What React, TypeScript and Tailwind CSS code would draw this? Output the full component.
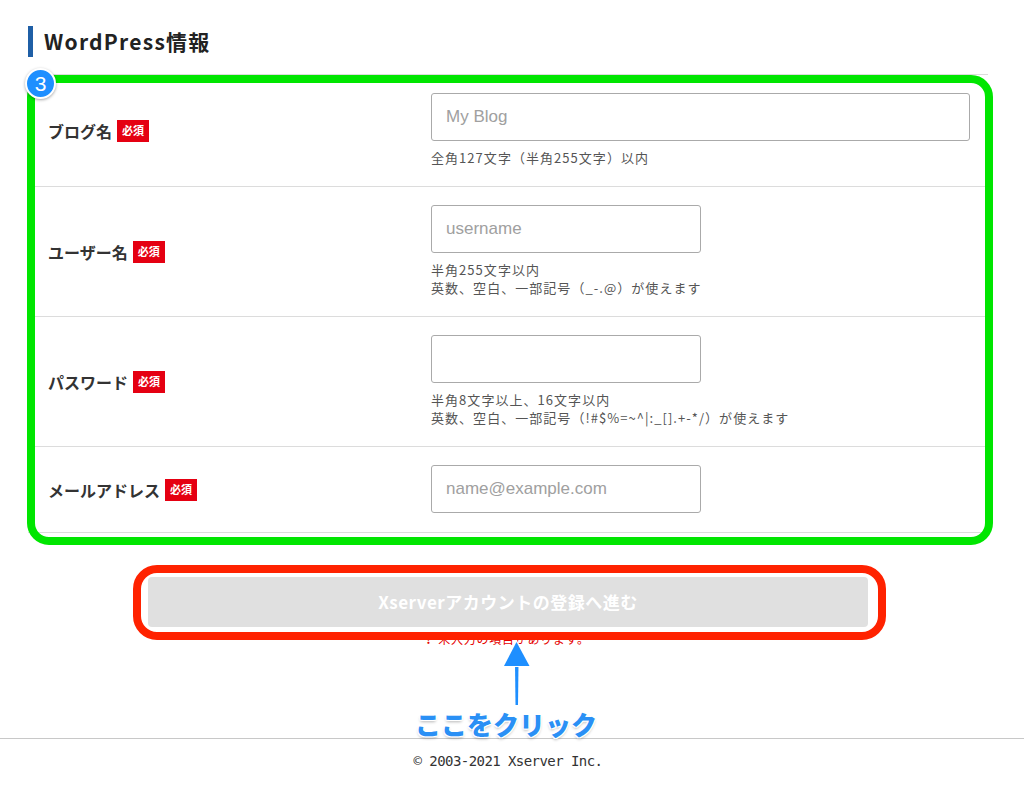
const rows = [
  {
    label: 'ブログ名',
    placeholder: 'My Blog',
    wide: true,
    hints: ['全角127文字（半角255文字）以内'],
  },
  {
    label: 'ユーザー名',
    placeholder: 'username',
    wide: false,
    hints: ['半角255文字以内', '英数、空白、一部記号（_-.@）が使えます'],
  },
  {
    label: 'パスワード',
    placeholder: '',
    wide: false,
    hints: ['半角8文字以上、16文字以内', '英数、空白、一部記号（!#$%=~^|:_[].+-*/）が使えます'],
  },
  {
    label: 'メールアドレス',
    placeholder: 'name@example.com',
    wide: false,
    hints: [],
  },
];

function FormRow({ label, placeholder, wide, hints }: (typeof rows)[number]) {
  return (
    <div className="flex border-b border-[#dcdcdc]">
      <div className="flex w-[403px] shrink-0 items-center pl-[20px]">
        <span className="text-[16px] font-bold leading-6 text-[#333]">{label}</span>
        <span className="ml-[5px] flex h-[22px] w-[32px] items-center justify-center bg-[#e50012] text-[11px] font-bold text-white">
          必須
        </span>
      </div>
      <div className="flex-1 pt-[18px] pb-[19px] pr-[18px]">
        <input
          type="text"
          placeholder={placeholder}
          className={`block h-12 rounded-[3px] border border-[#aaa] bg-white px-[14px] font-['Liberation_Sans',sans-serif] text-[17px] text-[#333] placeholder:text-[#a0a0a0] outline-none ${
            wide ? 'w-full' : 'w-[270px]'
          }`}
        />
        {hints.length > 0 && (
          <div className="mt-2 text-[13px] leading-[18px] tracking-[0.08em] text-[#555]">
            {hints.map((h) => (
              <p key={h}>{h}</p>
            ))}
          </div>
        )}
      </div>
    </div>
  );
}

export default function App() {
  return (
    <div className="relative min-h-[806px] bg-white font-['Noto_Sans_CJK_JP',sans-serif] text-[#333]">
      <div className="ml-[28px] mr-[36px] pt-[26px]">
        {/* Section title */}
        <h2 className="flex h-[31px] items-center border-l-[5px] border-[#1f5fa6] pl-[11px] text-[21px] font-bold tracking-[0.06em] text-[#222]">
          WordPress情報
        </h2>

        {/* Form table */}
        <div className="mt-[17px] border-t border-[#dcdcdc]">
          {rows.map((r) => (
            <FormRow key={r.label} {...r} />
          ))}
        </div>

        {/* Submit */}
        <button
          type="button"
          disabled
          className="mx-auto mt-[44px] block h-[50px] w-[720px] rounded-[4px] bg-[#e0e0e0] text-[17px] font-bold tracking-[0.03em] text-white"
        >
          Xserverアカウントの登録へ進む
        </button>
        <p className="mt-[4px] text-center text-[12px] leading-4 tracking-[0.06em] text-[#e60000]">
          <span className="mr-[7px] font-bold">!</span>未入力の項目があります。
        </p>
      </div>

      <footer className="mt-[91px] border-t border-[#c8c8c8] pt-[12px] pb-[34px] pr-[8px] text-center font-['DejaVu_Sans_Mono',monospace] text-[14px] leading-5 tracking-[-0.04em] text-[#333]">
        © 2003-2021 Xserver Inc.
      </footer>

      {/* Annotations */}
      <div className="pointer-events-none absolute left-[27px] top-[75px] h-[470px] w-[966px] rounded-[22px] border-[8px] border-[#00e600]" />
      <div className="absolute left-[25px] top-[68px] flex h-[31px] w-[31px] items-center justify-center rounded-full border-2 border-white bg-[#1e8fff] font-['Liberation_Sans',sans-serif] text-[21px] leading-none text-white shadow-[0_1px_3px_rgba(0,0,0,0.35)]">
        3
      </div>
      <div className="pointer-events-none absolute left-[133px] top-[565px] h-[75px] w-[753px] rounded-[24px] border-[8px] border-[#ff2200]" />
      <svg className="absolute left-[500px] top-[636px]" width="34" height="74" viewBox="0 0 34 74">
        <g fill="#1e8fff" stroke="#fff" strokeWidth="2" strokeLinejoin="round" style={{ paintOrder: 'stroke' }}>
          <path d="M15 28 L18.5 28 L18 69 L15.5 69 Z" />
          <path d="M16.5 6 L29.5 30 L4 30 Z" />
        </g>
      </svg>
      <div className="absolute left-[415px] top-[707px] text-[26px] font-black leading-[34px] text-[#2a90f5] [text-shadow:0_0_2px_#fff,0_0_2px_#fff,1px_1px_0_#fff,-1px_-1px_0_#fff,1px_-1px_0_#fff,-1px_1px_0_#fff,0_2px_3px_rgba(0,0,0,0.3)]">
        ここをクリック
      </div>
    </div>
  );
}
